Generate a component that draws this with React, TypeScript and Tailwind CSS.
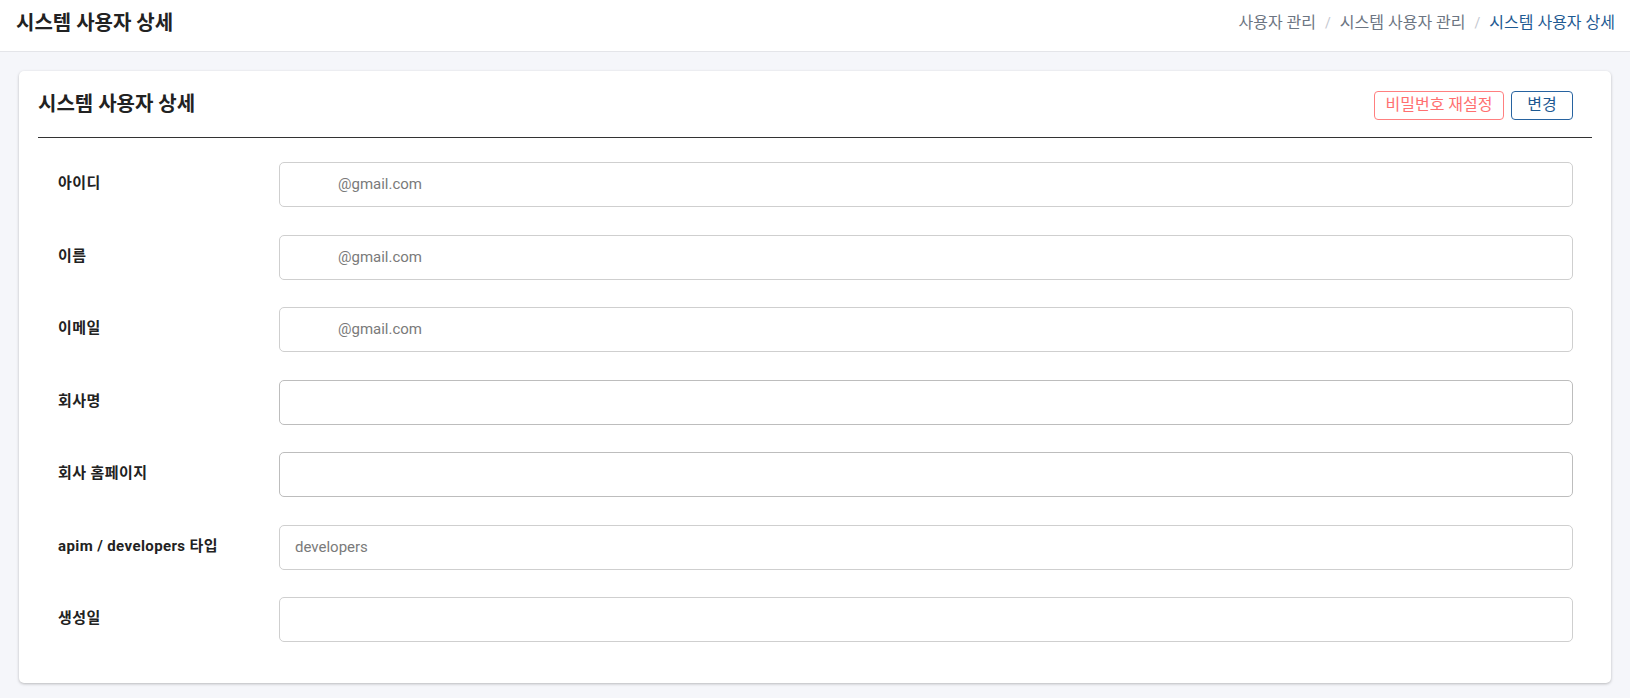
const fields = [
  { label: '아이디', value: '@gmail.com', indent: true },
  { label: '이름', value: '@gmail.com', indent: true },
  { label: '이메일', value: '@gmail.com', indent: true },
  { label: '회사명', value: '', dark: true },
  { label: '회사 홈페이지', value: '', dark: true },
  { label: 'apim / developers 타입', value: 'developers' },
  { label: '생성일', value: '' },
];

const App = () => {
  return (
    <div
      className="min-h-[698px] bg-[#f5f6fa] text-[#222]"
      style={{ fontFamily: 'Roboto, "Noto Sans CJK KR", sans-serif' }}
    >
      {/* Top bar */}
      <div className="h-[52px] bg-white border-b border-[#e4e5e9] flex items-center justify-between pl-4 pr-[15px] pb-[5px]">
        <h1 className="text-[20px] font-bold text-[#222]">시스템 사용자 상세</h1>
        <nav className="flex items-center text-[16px] text-[#6c7582]">
          <span>사용자 관리</span>
          <span className="mx-[9px] text-[#c3c7cf] text-[14px]">/</span>
          <span>시스템 사용자 관리</span>
          <span className="mx-[9px] text-[#c3c7cf] text-[14px]">/</span>
          <span className="text-[#1e5a92]">시스템 사용자 상세</span>
        </nav>
      </div>

      {/* Card */}
      <div className="mx-[19px] mt-[19px] bg-white rounded-[5px] shadow-[0_1px_3px_rgba(0,0,0,0.25)] px-[19px] pb-[41px]">
        <div className="h-[67px] flex items-center justify-between border-b border-[#333]">
          <h2 className="text-[20px] font-bold text-[#222]">시스템 사용자 상세</h2>
          <div className="flex items-center gap-[7px] pr-[19px] pt-[2px]">
            <button className="h-[29px] w-[130px] rounded-[4px] border border-[#ff7f7f] text-[#ff7070] text-[16px]">
              비밀번호 재설정
            </button>
            <button className="h-[29px] w-[62px] rounded-[4px] border border-[#2763a0] text-[#1e5a92] text-[16px]">
              변경
            </button>
          </div>
        </div>

        <div className="pt-[24px] pl-[20px] pr-[19px] flex flex-col gap-[27.5px]">
          {fields.map((f, i) => (
            <div key={i} className="flex items-center">
              <div className="w-[221px] shrink-0 text-[15px] font-bold text-[#222] tracking-[0.4px] pb-[2px]">
                {f.label}
              </div>
              <div
                className={`flex-1 h-[45px] rounded-[5px] border ${
                  f.dark ? 'border-[#bdbdbd]' : 'border-[#cfcfcf]'
                } flex items-center px-[15px] text-[15px] text-[#7a7a7a]`}
              >
                <span className={f.indent ? 'ml-[43px]' : ''}>{f.value}</span>
              </div>
            </div>
          ))}
        </div>
      </div>
    </div>
  );
};

export default App;
